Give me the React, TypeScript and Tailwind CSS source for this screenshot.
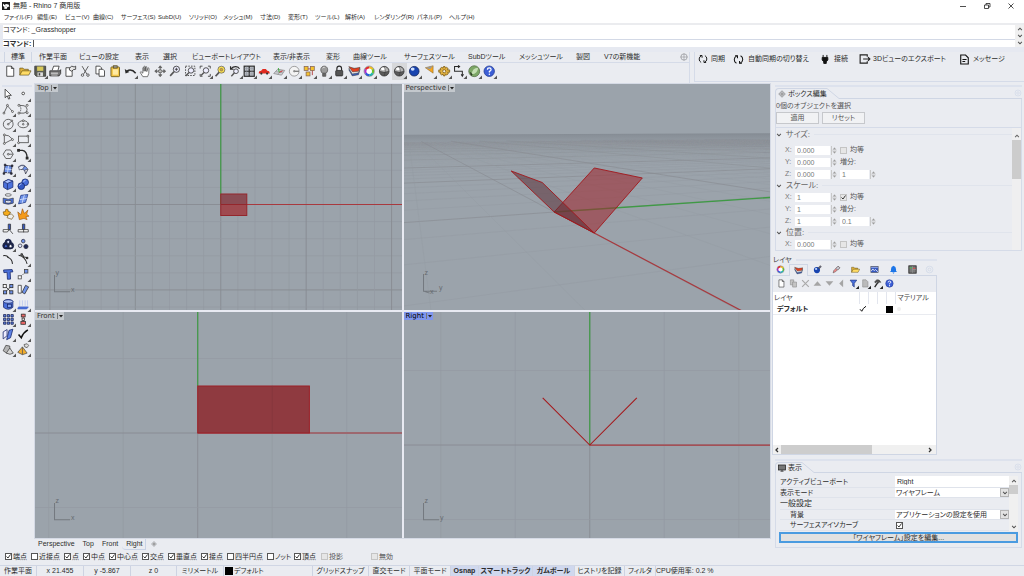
import { useState, type ReactNode } from "react";

/* ------------------------------------------------------------------ */
/* Icons                                                              */
/* ------------------------------------------------------------------ */

const K = "#2a2a2a";
const B = "#3f62c8";

const icons: Record<string, ReactNode> = {
  newFile: <path d="M3.5 1.5h6l3 3v10h-9zM9.5 1.5v3h3" fill="#fff" stroke={K} />,
  open: (
    <g stroke="#5b4a10" strokeWidth=".8">
      <path d="M1 13V4h4l1.5 1.5H12V8" fill="#e0b23c" />
      <path d="M1 13l3-5.5h11.5L12.5 13z" fill="#ffdc66" />
    </g>
  ),
  save: (
    <g>
      <path d="M1 1.5h14v13H3l-2-2z" fill="#5b5e55" stroke="#333" />
      <rect x="4" y="2" width="8" height="5.5" fill="#d8c95a" />
      <rect x="4.5" y="9.5" width="7" height="5" fill="#ddd" />
      <rect x="6" y="10.5" width="2" height="3" fill="#444" />
    </g>
  ),
  print: (
    <g stroke={K}>
      <path d="M4 7l2-5.5h7L11.5 7" fill="#fff" />
      <path d="M1 7.5h13l1-1.5v5l-2 3H1z" fill="#777" />
      <path d="M2.5 10.5h9" stroke="#fff" />
      <path d="M3 13h8" stroke="#ddd" />
    </g>
  ),
  props: (
    <g stroke={K}>
      <path d="M2.5 3.5h8v11h-8z" fill="#fff" />
      <path d="M7 4l3-2.5 3 1 2-1v4l-3 .5-2 2-3-1.5z" fill="#e6e6e6" />
    </g>
  ),
  cut: (
    <g stroke="#555" fill="none" strokeWidth="1.2">
      <path d="M4 1.5l6 10M12 1.5l-6 10" />
      <circle cx="4.5" cy="13" r="1.6" />
      <circle cx="11.5" cy="13" r="1.6" />
    </g>
  ),
  copy: (
    <g stroke={K} fill="#fff">
      <path d="M2.5 1.5h5l2 2v8h-7z" />
      <path d="M6.5 5.5h5l2 2v7h-7z" />
    </g>
  ),
  paste: (
    <g stroke="#5c4b12">
      <rect x="2.5" y="2.5" width="11" height="12.5" rx="1" fill="#f3c74b" />
      <rect x="5.5" y="1" width="5" height="3" fill="#999" />
      <path d="M5 5.5h6.5v7H5z" fill="#ffeaa3" stroke="none" />
    </g>
  ),
  undo: (
    <g>
      <path d="M4 7.5Q10 4.5 15 10.500" fill="none" stroke={K} strokeWidth="2" />
      <path d="M1 5l1 6 5-2z" fill={K} />
    </g>
  ),
  hand: (
    <path
      d="M5 15L1.5 9.5l1-1L5 10.5V3.5q1-1 1.5 0V8 2q1-1 1.6 0V8l.5-5.5q1-1 1.5 0L10 8.5 11.5 4q1-.6 1.4.3L12.5 11 11 15z"
      fill="#fff"
      stroke="#444"
      strokeWidth=".9"
    />
  ),
  rotate: (
    <g stroke="#555" fill="none">
      <path d="M8 2v12M2 8h12" />
      <path d="M6 3.500L8 1l2 2.500zM6 12.500L8 15l2-2.500zM3.500 6L1 8l2.500 2zM12.500 6L15 8l-2.500 2z" fill="#777" />
      <ellipse cx="8" cy="8" rx="2.500" ry="2" fill="#bbb" />
    </g>
  ),
  zoomIn: (
    <g fill="none" stroke={K}>
      <circle cx="9.5" cy="5.5" r="4" fill="#eef" />
      <path d="M6.5 8.5L1.5 14" strokeWidth="2" stroke="#555" />
      <path d="M9.5 3.5v4M7.5 5.5h4" />
    </g>
  ),
  zoomWin: (
    <g fill="none" stroke={K}>
      <rect x="2" y="1.5" width="12" height="12" strokeDasharray="2 1.5" />
      <circle cx="9" cy="7" r="3.5" fill="#eef" />
      <path d="M6.5 9.5L2 14" strokeWidth="1.8" stroke="#555" />
    </g>
  ),
  zoomExt: (
    <g fill="none" stroke={K}>
      <path d="M1.5 4.5v-3h3M11.5 1.5h3v3M14.5 11.5v3h-3M4.5 14.5h-3v-3" />
      <circle cx="9" cy="7" r="3.5" fill="#eef" />
      <path d="M6.5 9.5L2.5 13.5" strokeWidth="1.8" stroke="#555" />
    </g>
  ),
  zoomSel: (
    <g fill="none" stroke="#666">
      <circle cx="9.5" cy="6" r="4.5" fill="#ffe14a" />
      <circle cx="9.5" cy="6" r="1.7" fill="#e8a920" stroke="#777" />
      <path d="M6.5 9.5L2 14.5" strokeWidth="2.200" stroke="#555" />
    </g>
  ),
  undoView: (
    <g fill="none" stroke={K}>
      <path d="M2 1.5v4h4M2.5 5C6 1 12 1.5 13.5 5" strokeWidth="1.5" />
      <circle cx="9" cy="8" r="3" fill="#eef" />
      <path d="M7 10l-4 4.5" strokeWidth="1.8" stroke="#555" />
    </g>
  ),
  fourView: (
    <g stroke={K}>
      <rect x="1.5" y="1.5" width="13" height="13" fill="#b9bdc4" strokeWidth="1.5" />
      <path d="M8 1.5v13M1.5 8h13" strokeWidth="1.5" />
      <path d="M4.5 2v12M11.5 2v12M2 4.5h12M2 11.5h12" stroke="#8a8f98" strokeWidth=".6" />
    </g>
  ),
  car: (
    <g>
      <path d="M1 9.5Q1 7.5 4 7.5L6 5h4l2 2.5q3 0 3 2.5v1H1z" fill="#e02a20" />
      <circle cx="4.3" cy="11" r="1.4" fill="#333" />
      <circle cx="11.7" cy="11" r="1.4" fill="#333" />
    </g>
  ),
  cplane: (
    <g>
      <path d="M1 11l5-5.5L15 7l-4 6z" fill="#cfd3da" stroke="#888" />
      <path d="M3.5 8.5l9 1.5M6 12l5-5.5" stroke="#999" />
      <path d="M8 9.5l4.5-2" stroke="#c33" strokeWidth="1.2" />
      <path d="M8 9.5L7 4" stroke="#3a3" strokeWidth="1.2" />
    </g>
  ),
  named: (
    <g fill="none" stroke="#888">
      <circle cx="8" cy="8" r="6.300" fill="#f3f3f3" />
      <path d="M8 8h6" stroke={K} />
      <circle cx="8" cy="8" r="1" fill="#888" />
    </g>
  ),
  selGroup: (
    <g>
      <path d="M4 5h8v8" fill="none" stroke="#a22" />
      <rect x="1.5" y="2" width="5" height="5" fill="#f4c22e" stroke="#865" />
      <rect x="9.5" y="2" width="5" height="5" fill="#f4c22e" stroke="#865" />
      <rect x="4" y="9" width="5" height="5" fill="#f4c22e" stroke="#865" />
    </g>
  ),
  bulb: (
    <g stroke="#555">
      <path d="M5.5 10.5C2 7 3.5 1.5 8 1.5S14 7 10.5 10.5z" fill="#9b9b9b" />
      <path d="M6 11h4v3.5H6z" fill="#666" />
      <path d="M6 4q1-1.3 2.5-1" stroke="#fff" fill="none" />
    </g>
  ),
  lock: (
    <g stroke={K}>
      <path d="M5 7V4.5a3 3 0 016 0V7" fill="none" strokeWidth="1.5" />
      <rect x="3.5" y="7" width="9" height="7" rx="1" fill="#555" />
    </g>
  ),
  layers: (
    <g stroke="#333" strokeWidth=".6">
      <path d="M1 6l4.500 8 8-1.500 2-7z" fill="#3d5fb5" />
      <path d="M1 4l4.500 7.500 8-1.500 2-5.500z" fill="#f2f2f2" />
      <path d="M1 2l5 7 7.500-1 2-5-7.500 1.500z" fill="#e5401f" />
    </g>
  ),
  wheel: (
    <g fill="none" strokeWidth="3">
      <path d="M8 3a5 5 0 014.3 2.5" stroke="#f0c020" />
      <path d="M12.3 5.5a5 5 0 010 5" stroke="#6cc52c" />
      <path d="M12.3 10.5A5 5 0 018 13" stroke="#20b8b0" />
      <path d="M8 13a5 5 0 01-4.3-2.5" stroke="#2c58e0" />
      <path d="M3.7 10.5a5 5 0 010-5" stroke="#b02cd0" />
      <path d="M3.7 5.5A5 5 0 018 3" stroke="#e52a2a" />
      <circle cx="8" cy="8" r="6.7" stroke="#444" strokeWidth=".5" />
      <circle cx="8" cy="8" r="3.3" fill="#fff" stroke="none" />
    </g>
  ),
  ballWire: (
    <g>
      <circle cx="8" cy="8" r="6.200" fill="#5a5a5a" stroke="#333" />
      <path d="M2.5 8a5.5 5.5 0 0111 0q-5 2-11 0z" fill="#b5b5b5" />
      <ellipse cx="6.5" cy="5" rx="2.6" ry="1.9" fill="#fff" />
      <path d="M8 2q3 5 0 12M2 8q6 3 12 0" fill="none" stroke="#333" strokeWidth=".6" />
    </g>
  ),
  ballBlue: (
    <g>
      <circle cx="8" cy="8" r="6.2" fill="#1844b0" stroke="#12245c" />
      <ellipse cx="6" cy="5.3" rx="2.5" ry="2" fill="#cfe0ff" />
    </g>
  ),
  spot: (
    <g>
      <path d="M3 3.5L13 1v9.500z" fill="#f5a623" stroke="#7a5a20" strokeWidth=".6" />
      <path d="M3 3.500L13 1l-4 4.500z" fill="#999" />
    </g>
  ),
  gear: (
    <g stroke="#7a5a12">
      <path
        d="M7 2h2l.5 2 1.5-1 2 1.5-.8 1.8H15v3h-2.5l.7 2-1.9 1.5-1.8-1L9 14H7l-.5-2.2-1.8 1-1.9-1.5.7-2H1v-3h2.5L2.8 4.5l2-1.5 1.7 1z"
        fill="#e0b040"
      />
      <circle cx="8" cy="8" r="2" fill="#f5efe0" />
    </g>
  ),
  dim: (
    <g fill="none" stroke={K} strokeWidth="1.3">
      <path d="M8 2H2v6h10v6" />
      <path d="M6.500 .500L8.500 2 6.500 3.500M10.500 12l1.500 2.500 1.500-2.500" />
    </g>
  ),
  grass: (
    <g>
      <circle cx="8" cy="8" r="7" fill="#7da867" stroke="#56704a" />
      <path d="M5 12q0-8 8-8.500-.5 7.500-8 8.500z" fill="#c5dfb4" />
      <path d="M2 8.500l4 3.500-2 2z" fill="#2c3b25" />
    </g>
  ),
  help: (
    <g>
      <circle cx="8" cy="8" r="6.7" fill="#3d5fd6" stroke="#243c94" />
      <path d="M5.7 6.2q0-2.4 2.4-2.4 2.3 0 2.3 2Q10.4 7.3 8.2 8.2V9.6" fill="none" stroke="#fff" strokeWidth="1.6" />
      <circle cx="8.2" cy="12" r="1" fill="#fff" />
    </g>
  ),

  arrow: <path d="M4 1.5v11l2.7-2.5 1.8 4.3 1.7-.8L8.4 9.5H12z" fill="#fff" stroke={K} />,
  point: <circle cx="8" cy="7" r="1.7" fill="#fff" stroke={K} />,
  polyline: (
    <g fill="#fff" stroke="#444">
      <path d="M2.5 13L7 3.5l6 7" fill="none" />
      <circle cx="2.5" cy="13" r="1.2" />
      <circle cx="7" cy="3" r="1.2" />
      <circle cx="13.5" cy="11" r="1.2" />
    </g>
  ),
  ctrlCurve: (
    <g fill="#fff" stroke="#444">
      <path d="M3 13h6q4-1 4-4.500T9 3.500L3 3" fill="none" />
      <path d="M3 3q4 4 0 10" fill="none" strokeDasharray="2 1" />
      <circle cx="2.5" cy="3" r="1.3" />
      <circle cx="13" cy="3" r="1.3" />
      <circle cx="2.5" cy="13" r="1.3" />
      <circle cx="13" cy="12.5" r="1.3" />
    </g>
  ),
  circle: (
    <g fill="none" stroke="#444">
      <circle cx="8" cy="8" r="6.3" />
      <path d="M8 8l4.5-4" />
      <circle cx="8" cy="8" r="1" fill="#fff" />
      <circle cx="12.7" cy="3.5" r="1" fill="#fff" />
    </g>
  ),
  ellipse: (
    <g fill="none" stroke="#444">
      <ellipse cx="8" cy="8" rx="6.7" ry="4.5" />
      <circle cx="8" cy="8" r="1" />
      <circle cx="8" cy="3.5" r="1.2" fill="#fff" />
      <circle cx="14" cy="8" r="1" fill="#fff" />
    </g>
  ),
  arc: (
    <g fill="none" stroke="#444">
      <path d="M3 2.5v11l10.5-5.5Q9 2 3 2.5z" />
      <circle cx="3" cy="2.5" r="1.2" fill="#fff" />
      <circle cx="3" cy="13.5" r="1.2" fill="#fff" />
      <circle cx="13.5" cy="8.5" r="1.2" fill="#fff" />
    </g>
  ),
  rect: (
    <g fill="none" stroke="#444">
      <rect x="2" y="4" width="12.5" height="8.5" />
      <circle cx="2" cy="12.5" r="1.2" fill="#fff" />
      <circle cx="14" cy="4" r="1.2" fill="#fff" />
    </g>
  ),
  polygon: (
    <g fill="none" stroke="#444">
      <path d="M5 2.5h6L14.5 8 11 13.5H5L1.5 8z" />
      <path d="M8 8h6" />
      <circle cx="8" cy="8" r="1.1" fill="#fff" />
    </g>
  ),
  fillet: (
    <g fill="none" stroke={K} strokeWidth="1.6">
      <path d="M2 3h5q6 1 6 10" />
      <rect x="1" y="2" width="2" height="2" fill={K} />
      <rect x="12" y="12" width="2" height="2" fill={K} />
    </g>
  ),
  srfPts: (
    <g stroke="#223">
      <path d="M4 3l9 1-1.5 9-9-1z" fill="#6f93ea" />
      <path d="M3.5 7.5l9 1M8.5 3.5L7 13" stroke="#dbe5ff" />
      <path d="M1.5 12.5h2v2h-2zM3 1.5h2v2H3zM12 2.5h2v2h-2zM11 12.5h2v2h-2z" fill="#333" />
    </g>
  ),
  srfEdge: (
    <g stroke="#334" strokeWidth=".8">
      <path d="M2 5q6-6 12 3l-3 6q0-6-6-6z" fill="#6f93ea" />
      <path d="M2 5q4-3 8-1L6.500 8.500Q4 8 3 9z" fill="#e5ebfa" />
      <path d="M11 14l3-6-4 1z" fill="#fff" />
    </g>
  ),
  box: (
    <g stroke="#1d2f70">
      <path d="M2 5l6-3 6 2v8l-7 3-5-3z" fill="#4a70dc" />
      <path d="M2 5l5 2 7-3-6-2z" fill="#a9c0ff" />
      <path d="M7 7v8" />
    </g>
  ),
  spheres: (
    <g stroke="#16276a">
      <circle cx="10.5" cy="5.5" r="4.3" fill="#4a70dc" />
      <circle cx="5.5" cy="10.5" r="4.3" fill="#3358c4" />
      <path d="M3 10q1-2.5 3-2.5M8.5 5q.7-2 2.5-2" stroke="#cfdcff" fill="none" />
    </g>
  ),
  revolve: (
    <g stroke="#333" strokeWidth=".8">
      <ellipse cx="8" cy="2.500" rx="4" ry="1.600" fill="none" />
      <path d="M1.5 6.500q6.5 3 13 0v6.500q-6.5 3-13 0z" fill="#4a70dc" />
      <path d="M4.5 9.500q3.5 1 7 0v3q-3.5 1-7 0z" fill="#e9efff" />
    </g>
  ),
  mesh: (
    <g stroke="#223a86">
      <path d="M5 3l9-1-3 10-9 2z" fill="#6f93ea" />
      <path d="M3.5 8.5l9-1.5M9.5 2.5L6.5 13" stroke="#dbe5ff" />
    </g>
  ),
  puzzle: (
    <g stroke="#6a4a08" strokeWidth=".8">
      <path d="M1.5 5l3-.5Q4 1 6.5 1.5T7.5 4L11 5.5 9.5 8l-2 2-5-1z" fill="#f6ac1d" />
      <path d="M8 9l4-1.5 3 3-2.5 4-3-1-3-1z" fill="#eee" />
    </g>
  ),
  explode: (
    <path d="M3 15L1 5l4 3.5L7 1l2.5 6L14 2.5 12.5 8l3 2.5-4 .7L13 15l-4-1.5z" fill="#f59a18" stroke="#8f4a08" strokeWidth=".7" />
  ),
  trim: (
    <g stroke="#333">
      <path d="M9 8l5 6" fill="none" />
      <path d="M8 1.5h3v7H8z" fill="#3558c0" />
      <path d="M1.5 8.5H9l-2 3H1.5z" fill="#fff" />
    </g>
  ),
  split: (
    <g stroke="#333">
      <path d="M7 1.5h3v7H7z" fill="#3558c0" />
      <path d="M1.5 8.5h13v3h-13z" fill="#fff" />
      <path d="M8.5 8v4" />
    </g>
  ),
  group: (
    <g stroke="#101840">
      <path d="M8 1.500q4 0 4 4 3 1 3 4.500 0 4-4 4H5q-4 0-4-4Q1 6.500 4 5.500q0-4 4-4z" fill="#1d2446" />
      <circle cx="8" cy="5" r="2" fill="#dfe6ff" />
      <circle cx="5" cy="10.5" r="2" fill="#3f62c8" />
      <circle cx="11" cy="10.5" r="2" fill="#fff" />
    </g>
  ),
  ungroup: (
    <g stroke="#334">
      <circle cx="8" cy="4" r="2.3" fill="#6f93ea" />
      <circle cx="4" cy="10" r="2.3" fill="#dfe6ff" />
      <circle cx="11.5" cy="11" r="2.7" fill="#1d2857" />
    </g>
  ),
  blend: (
    <g fill="none" stroke={K} strokeWidth="1.4">
      <path d="M1.500 3.500Q6 2.500 8.500 6" />
      <path d="M7 5.500q6 1.500 6.500 8.500" />
    </g>
  ),
  extend: (
    <g fill="none" stroke={K} strokeWidth="1.3">
      <path d="M2 3q8 1 11 11M6 1l3 4 5 1" />
      <circle cx="6" cy="2" r="1" fill="#fff" />
      <circle cx="13" cy="6.5" r="1" fill="#fff" />
    </g>
  ),
  textT: <path d="M2 2.5L13 2l1 3-3.5.3.5 9-4 .2-.5-9L2.5 6z" fill="#4a70dc" stroke="#16276a" />,
  move: (
    <g stroke="#444">
      <path d="M5 11l6-6" strokeDasharray="2 1" />
      <rect x="1.5" y="10" width="4" height="4" fill="#fff" />
      <rect x="9.5" y="2" width="4.5" height="4.5" fill="#6f93ea" />
    </g>
  ),
  array: (
    <g stroke={K}>
      <path d="M4 4l8 8M4 12l8-8" />
      <rect x="1.5" y="2" width="4" height="4" fill="#fff" />
      <rect x="10" y="2" width="4" height="4" fill="#6f93ea" />
      <rect x="2" y="10" width="4" height="4" fill="#6f93ea" />
      <rect x="10" y="10" width="4" height="4" fill="#6f93ea" />
    </g>
  ),
  rotate2: (
    <g stroke="#333">
      <path d="M1.5 3h4v10h-4z" fill="#fff" />
      <path d="M11 3l4 2-5 9-3.5-2z" fill="#6f93ea" />
    </g>
  ),
  boolean: (
    <g stroke="#16276a">
      <path d="M2 4q6-4 12 0v8q-6 5-12 0z" fill="#4a70dc" />
      <ellipse cx="8" cy="4.5" rx="6" ry="2.3" fill="#b5c8fb" />
      <rect x="7" y="8" width="5" height="4" fill="#86a4f0" />
    </g>
  ),
  project: (
    <g stroke={B}>
      <path d="M3.5 3v7M7 3v7M10.5 3v7M13.5 3v7" stroke="#b8c6ee" />
      <path d="M2 11.5h12.5l-2 2.5H1z" fill="#4a70dc" />
    </g>
  ),
  gridArr: (
    <g fill="#5d82e6" stroke="#1c2450">
      <path d="M2 2h3v3H2zM6.7 2h3v3h-3zM11.5 2h3v3h-3zM2 6.7h3v3H2zM6.7 6.7h3v3h-3zM11.5 6.7h3v3h-3zM2 11.5h3v3H2zM6.7 11.5h3v3h-3zM11.5 11.5h3v3h-3z" />
    </g>
  ),
  align: (
    <g stroke="#333">
      <path d="M8 1v14" stroke="#c33" />
      <rect x="5.5" y="1.5" width="5" height="3.5" fill="#e66" />
      <rect x="6.5" y="6.5" width="3" height="3" fill="#ddd" />
      <rect x="5" y="11" width="6" height="3.5" fill="#e66" />
    </g>
  ),
  flow: (
    <g stroke="#16276a">
      <path d="M1.5 5l5-3v8l-5 4z" fill="#eef" />
      <path d="M9 3l5-1.5-3 11L6 15z" fill="#5d82e6" />
    </g>
  ),
  check: <path d="M2 8.5l3.5 4Q8 6 14 2.5" fill="none" stroke="#111" strokeWidth="2" />,
  analyze: (
    <g stroke="#444">
      <path d="M5 3l5 1v8l-4 1-4.5-3z" fill="#b5b5b5" />
      <path d="M10 6.500l4.500 6.500q-4 3-9 0z" fill="#d5d5d5" />
    </g>
  ),
  drape: (
    <g stroke="#555">
      <path d="M9 2l4-1 2 2-2 3-3-1z" fill="#ddd" />
      <path d="M7 5l6 8-6 2-6-3z" fill="#f2ad2c" />
      <path d="M7 5v10" />
    </g>
  ),
  pen: (
    <g stroke="#444" strokeWidth=".8">
      <path d="M2 14l1-4 8-8 3 3-8 7z" fill="#e88" />
      <path d="M7 6l3 3 4-4-3-3z" fill="#c9ccd6" />
    </g>
  ),
  material: (
    <g>
      <circle cx="7" cy="9" r="5.5" fill="#1844b0" />
      <ellipse cx="5.5" cy="7" rx="2" ry="1.6" fill="#cfe0ff" />
      <path d="M9 5l4-4 2 2-4 4z" fill="#667" stroke="#333" strokeWidth=".6" />
    </g>
  ),
  imgPanel: (
    <g>
      <rect x="1.5" y="2.5" width="13" height="11" fill="#3558c0" stroke="#555" />
      <path d="M2 11l3-4 2.5 3 2-2 4.5 4" fill="none" stroke="#fff" strokeWidth="1.4" />
      <path d="M2 4.5h12" stroke="#c9d5ff" />
    </g>
  ),
  bell: <path d="M8 1.5q4.5 1 4.5 6v3l2 2h-13l2-2v-3q0-5 4.5-6zM6 13.500h4L8 15.500z" fill="#1d76e8" />,
  panelDark: (
    <g>
      <rect x="1.5" y="1.5" width="13" height="13" fill="#7a7a7a" stroke="#222" strokeWidth="1.5" />
      <path d="M8 2v12M8 8h6" stroke="#999" />
      <path d="M3 5h4" stroke="#4c4" strokeWidth="1.500" />
      <path d="M9 6h4" stroke="#e44" strokeWidth="1.500" />
    </g>
  ),
  deco: (
    <g fill="none" stroke="#c8d3e4">
      <circle cx="8" cy="8" r="6" />
      <circle cx="8" cy="8" r="2.5" />
    </g>
  ),
  gearLine: (
    <g fill="none" stroke="#8b8d92" strokeWidth="1.3">
      <circle cx="8" cy="8" r="6.3" />
      <circle cx="8" cy="8" r="2.3" />
      <path d="M8 1v3M8 12v3M1 8h3M12 8h3" />
    </g>
  ),
  copyGray: (
    <g stroke="#888" fill="#c4c4c4">
      <path d="M2.5 1.5h6v9h-6z" />
      <path d="M6.5 5.5h7v9h-7z" />
    </g>
  ),
  xGray: <path d="M2 2l12 12M14 2L2 14" stroke="#a9a9a9" strokeWidth="2" />,
  triUp: <path d="M8 4l7 8H1z" fill="#a5a5a5" />,
  triDown: <path d="M8 12L1 4h14z" fill="#a5a5a5" />,
  triLeft: <path d="M4 8l7-7v14z" fill="#a5a5a5" />,
  funnel: <path d="M2 2h12L9.5 8v6.5L6.5 12V8z" fill="#4a70dc" stroke="#16276a" />,
  docGray: <path d="M3 1.5h6l3.5 3.5v9.5H3z" fill="#bbb" stroke="#888" />,
  hammer: (
    <g stroke={K}>
      <path d="M3 5l4-3.500 4 .500 3 4-2.500-.500-2 2L7 5 4.500 7z" fill="#555" />
      <path d="M8.5 6.500L3 14.500" strokeWidth="2.500" />
    </g>
  ),
  sync: (
    <g fill="none" stroke="#111" strokeWidth="1.5">
      <path d="M5 13.5A6 6 0 015.5 2.7M11 2.5a6 6 0 01-.5 10.8" />
      <path d="M3 2.5h3.5V6M13 13.5H9.5V10" />
    </g>
  ),
  plug: (
    <path d="M5 1.5v4M11 1.5v4M3.5 5.5h9v4L10 12.5v2.5H6v-2.5L3.5 9.5z" fill="#111" stroke="#111" strokeWidth="1.5" />
  ),
  exportI: (
    <g fill="none" stroke="#222" strokeWidth="1.5">
      <path d="M11 5V2.5H1.5v11H11V11" />
      <path d="M5.5 8h9M12 5.5L14.5 8 12 10.5" />
    </g>
  ),
  message: (
    <g fill="none" stroke="#111" strokeWidth="1.6">
      <path d="M2.5 1.5h7l4 4v9h-11z" />
      <path d="M5 8h6M5 11h4" />
    </g>
  ),
  cube3: (
    <g fill="none" stroke="#444">
      <path d="M8 1.5L14.5 8 8 14.5 1.5 8z" />
      <path d="M8 4.5V12M4.5 8H12" />
      <circle cx="8" cy="8" r="2" fill="#fff" />
    </g>
  ),
  monitor: (
    <g>
      <rect x="1" y="2" width="14" height="10" fill="#777" stroke="#222" strokeWidth="1.5" />
      <path d="M5 14.5h6M8 12v2" stroke="#222" strokeWidth="1.5" />
    </g>
  ),
  rhino: (
    <g>
      <rect width="16" height="16" fill="#1a1a1a" />
      <path d="M2 3l3 3 3-2 5 1 2 4-4 1-2 4-5-1 1-3-3-2z" fill="#fff" />
      <path d="M7 7l2 1-1 2z" fill="#1a1a1a" />
    </g>
  ),
};

function Icon({ name, className = "size-[13px]" }: { name: string; className?: string }) {
  return (
    <svg viewBox="0 0 16 16" className={`shrink-0 ${className}`} aria-hidden="true">
      {icons[name]}
    </svg>
  );
}

function ToolButton({ name, flyout = false, active = false }: { name: string; flyout?: boolean; active?: boolean }) {
  return (
    <button
      type="button"
      aria-label={name}
      className={`flex min-w-0 items-center justify-center ${active ? "bg-[#d7d8da]" : "hover:bg-[#dde2ee]"}`}
    >
      <svg viewBox="0 0 18 18" className="size-[14px]" aria-hidden="true">
        {icons[name]}
        {flyout && <path d="M18 13.5V18h-4.500z" fill="#555" />}
      </svg>
    </button>
  );
}

/* ------------------------------------------------------------------ */
/* Top area                                                           */
/* ------------------------------------------------------------------ */

const menus: [string, string][] = [
  ["ファイル(F)", "w-[33px]"],
  ["編集(E)", "w-[28px]"],
  ["ビュー(V)", "w-[28px]"],
  ["曲線(C)", "w-[28px]"],
  ["サーフェス(S)", "w-[37px]"],
  ["SubD(U)", "w-[31px]"],
  ["ソリッド(O)", "w-[34px]"],
  ["メッシュ(M)", "w-[37px]"],
  ["寸法(D)", "w-[28px]"],
  ["変形(T)", "w-[27px]"],
  ["ツール(L)", "w-[30px]"],
  ["解析(A)", "w-[29px]"],
  ["レンダリング(R)", "w-[43px]"],
  ["パネル(P)", "w-[32px]"],
  ["ヘルプ(H)", "w-[32px]"],
];

const toolTabs: [string, string][] = [
  ["標準", "w-[28px]"],
  ["作業平面", "w-[40px]"],
  ["ビューの設定", "w-[56px]"],
  ["表示", "w-[28px]"],
  ["選択", "w-[29px]"],
  ["ビューポートレイアウト", "w-[81px]"],
  ["表示/非表示", "w-[53px]"],
  ["変形", "w-[27px]"],
  ["曲線ツール", "w-[51px]"],
  ["サーフェスツール", "w-[64px]"],
  ["SubDツール", "w-[51px]"],
  ["メッシュツール", "w-[57px]"],
  ["製図", "w-[28px]"],
  ["V7の新機能", "w-[60px]"],
];

const toolbar = [
  "newFile", "open", "save+", "print", "props", "cut", "copy", "paste", "undo+", "hand", "rotate",
  "zoomIn", "zoomWin", "zoomExt+", "zoomSel", "undoView+", "fourView+", "car+", "cplane+", "named+",
  "selGroup+", "bulb+", "lock+", "layers+", "wheel+", "ballWire", "ballWire+", "ballBlue+", "spot+",
  "gear+", "dim+", "grass+", "help+",
];

function TitleBar() {
  return (
    <header className="flex h-3 items-center bg-white pl-[2px]">
      <Icon name="rhino" className="size-2" />
      <h1 className="ml-[3px] flex-1 text-[7px] leading-3">無題 - Rhino 7 商用版</h1>
      <div className="flex items-center gap-4 pr-[9px]">
        <button type="button" aria-label="最小化">
          <svg viewBox="0 0 8 8" className="size-2"><path d="M1 4.5h6" stroke="#222" strokeWidth=".8" /></svg>
        </button>
        <button type="button" aria-label="元に戻す">
          <svg viewBox="0 0 8 8" className="size-2" fill="none" stroke="#222" strokeWidth=".8"><path d="M1.5 3h4v3.5h-4zM3 3V1.5h4V5H5.5" /></svg>
        </button>
        <button type="button" aria-label="閉じる">
          <svg viewBox="0 0 8 8" className="size-2"><path d="M1.500 1.5l5 5M6.5 1.5l-5 5" stroke="#222" strokeWidth=".8" /></svg>
        </button>
      </div>
    </header>
  );
}

function Menus() {
  return (
    <nav className="flex h-[11px] items-center bg-white pl-1 text-[6px] leading-[11px]">
      {menus.map(([label, w]) => (
        <button key={label} type="button" className={`text-left whitespace-nowrap ${w}`}>
          {label}
        </button>
      ))}
    </nav>
  );
}

function CommandArea() {
  return (
    <section className="border-t-2 border-[#ebecef] bg-white">
      <div className="flex border-l-[3px] border-[#e6e9f1]">
        <div className="min-w-0 flex-1">
          <p className="h-[14px] text-[7px] leading-[9px]">コマンド: _Grasshopper</p>
          <label className="flex h-2 items-center border-t border-[#d3d9e6] text-[7px] leading-[7px] font-bold">
            コマンド:
            <input className="ml-[2px] h-[7px] flex-1 border-l border-[#555] bg-transparent text-[7px] outline-none" />
          </label>
        </div>
        <div className="flex w-[9px] flex-col items-center justify-between bg-[#f0f0f0] py-px">
          <Chevron up />
          <Chevron />
          <Chevron />
        </div>
      </div>
    </section>
  );
}

function Chevron({ up = false }: { up?: boolean }) {
  return (
    <svg viewBox="0 0 8 8" className="size-[6px] shrink-0" fill="none" stroke="#555" strokeWidth="1.4" aria-hidden="true">
      <path d={up ? "M1.5 5.5L4 3l2.5 2.5" : "M1.5 2.5L4 5l2.5-2.5"} />
    </svg>
  );
}

function Toolbars() {
  const [tab, setTab] = useState("標準");
  return (
    <section className="flex h-9 border-t-[5px] border-[#e6e9f1] bg-[#eaecf1]">
      <div className="flex w-[690px] flex-col border-r border-[#d5dbe8]">
        <div className="flex h-[11px] items-stretch border-b border-[#d5dbe8] pl-1">
          {toolTabs.map(([label, w]) => (
            <button
              key={label}
              type="button"
              onClick={() => setTab(label)}
              className={`text-left text-[7px] leading-[10px] whitespace-nowrap ${w} ${
                tab === label ? "border-x border-[#cfd6e4] pl-[6px]" : "pl-[7px]"
              }`}
            >
              {label}
            </button>
          ))}
          <button type="button" aria-label="オプション" className="ml-auto pr-px">
            <Icon name="gearLine" className="size-2" />
          </button>
        </div>
        <div className="ml-1 grid h-[17px] w-[493px] grid-cols-[repeat(33,minmax(0,1fr))]">
          {toolbar.map((t, i) => (
            <ToolButton key={i} name={t.replace("+", "")} flyout={t.endsWith("+")} active={i === 26} />
          ))}
        </div>
      </div>
      <div className="ml-1 flex h-[30px] flex-1 items-start border-b border-l border-[#d5dbe8] pl-[3px] text-[7px] leading-[14px]">
        <button type="button" className="flex h-[14px] w-[35px] items-center gap-[3px] whitespace-nowrap"><Icon name="sync" className="size-[10px]" />同期</button>
        <button type="button" className="flex h-[14px] w-[87px] items-center gap-[4px] whitespace-nowrap"><Icon name="sync" className="size-[11px]" />自動同期の切り替え</button>
        <button type="button" className="flex h-[14px] w-[39px] items-center gap-1 whitespace-nowrap"><Icon name="plug" className="size-[10px]" />接続</button>
        <button type="button" className="flex h-[14px] w-[99px] items-center gap-[2px] whitespace-nowrap"><Icon name="exportI" className="size-3" />3Dビューのエクスポート</button>
        <button type="button" className="flex h-[14px] items-center gap-[3px] pl-px whitespace-nowrap"><Icon name="message" className="size-[11px]" />メッセージ</button>
      </div>
    </section>
  );
}

/* ------------------------------------------------------------------ */
/* Side tools                                                         */
/* ------------------------------------------------------------------ */

const sideTools = [
  "arrow", "point+", "polyline+", "ctrlCurve+", "circle+", "ellipse+", "arc+", "rect+", "polygon+",
  "fillet+", "srfPts+", "srfEdge+", "box+", "spheres+", "revolve+", "mesh+", "puzzle", "explode",
  "trim", "split", "group+", "ungroup", "blend", "extend+", "textT", "move+", "array", "rotate2",
  "boolean+", "project+", "gridArr+", "align+", "flow+", "check+", "analyze+", "drape+",
];

function SideTools() {
  return (
    <aside className="w-[34px] shrink-0 px-px pt-[2px]">
      <div className="mx-px h-[2px] bg-[#dde2ed]" />
      <div className="grid h-[270px] w-[30px] grid-cols-2 grid-rows-18">
        {sideTools.map((t) => (
          <ToolButton key={t} name={t.replace("+", "")} flyout={t.endsWith("+")} />
        ))}
      </div>
    </aside>
  );
}

/* ------------------------------------------------------------------ */
/* Viewports                                                          */
/* ------------------------------------------------------------------ */

const MINOR = "#949aa2";
const MAJOR = "#888b92";
const RED = "#a8393e";
const GREEN = "#3f9a45";

function range(from: number, to: number) {
  return Array.from({ length: to - from + 1 }, (_, i) => from + i);
}

function OrthoGrid({ ox, oy, step, major }: { ox: number; oy: number; step: number; major: number }) {
  return (
    <g>
      {range(-12, 12).map((i) => (
        <g key={i} stroke={i % major === 0 ? MAJOR : MINOR} strokeWidth={i % major === 0 ? 0.9 : 0.7}>
          <path d={`M${ox + i * step} -50V300`} />
          <path d={`M-50 ${oy + i * step}H450`} />
        </g>
      ))}
    </g>
  );
}

function AxisMark({ h, v }: { h: string; v: string }) {
  return (
    <g fill="none" stroke="#74797f" strokeWidth="1">
      <path d="M19.5 191v16.5H35" />
      <text x="20.5" y="191" fontSize="7" fill="#666b71" stroke="none">{v}</text>
      <text x="36" y="208" fontSize="7" fill="#666b71" stroke="none">{h}</text>
    </g>
  );
}

function TopView() {
  return (
    <>
      <OrthoGrid ox={185.5} oy={120.5} step={17.06} major={5} />
      <path d="M185.5 -50V120" stroke={GREEN} strokeWidth="1.2" />
      <path d="M185.5 120.5H450" stroke={RED} strokeWidth="1.2" />
      <path d="M185.5 110h26v10.5h-26z" fill="#8a4c54" />
      <path d="M185.5 120.5h26v11h-26z" fill="#9f4a50" />
      <path d="M185.5 110h26v21.5h-26zM185.5 120.5h26" fill="none" stroke="#94262c" />
      <AxisMark h="x" v="y" />
    </>
  );
}

function FrontView() {
  return (
    <>
      <OrthoGrid ox={162.5} oy={121} step={74.4} major={5} />
      <path d="M162.5 -50V74" stroke={GREEN} strokeWidth="1.2" />
      <path d="M162.5 121H450" stroke={RED} strokeWidth="1.2" />
      <path d="M162.5 74h111.5v47h-111.5z" fill="#8f3a40" stroke="#9c1f26" />
      <path d="M237 74v47" stroke="#84363c" strokeWidth=".8" />
      <AxisMark h="x" v="z" />
    </>
  );
}

function RightView() {
  return (
    <>
      <OrthoGrid ox={185.5} oy={133} step={74.4} major={5} />
      <path d="M185.5 -50V133" stroke={GREEN} strokeWidth="1.2" />
      <path d="M185.5 133H450" stroke={RED} strokeWidth="1.2" />
      <path d="M138.500 86l47 47L232.500 86" fill="none" stroke="#a5191c" strokeWidth="1.1" />
      <AxisMark h="y" v="z" />
    </>
  );
}

/* Ground plane projection: origin, the two vanishing points and the unit scales. */
function project(i: number, j: number): string {
  const a = -0.1434 * i;
  const b = 0.0534 * j;
  const w = 1 + a + b;
  return `${((150 + a * 4 + b * 1276) / w).toFixed(1)} ${((128 + a * 50.5 + b * 49) / w).toFixed(1)}`;
}

function gridOpacity(n: number) {
  const d = Math.abs(n);
  if (d > 30) return 0.3;
  return d > 10 ? 0.5 : 0.8;
}

function PerspectiveView() {
  return (
    <>
      <defs>
        <linearGradient id="haze" x1="0" y1="0" x2="0" y2="1">
          <stop offset="0" stopColor="#747a82" stopOpacity=".6" />
          <stop offset=".4" stopColor="#7f858d" stopOpacity=".3" />
          <stop offset="1" stopColor="#9ba3ab" stopOpacity="0" />
        </linearGradient>
      </defs>
      <path d="M-40 51L420 49v22H-40z" fill="url(#haze)" />
      <g fill="none">
        {range(-60, 4).map((i) => (
          <path
            key={`i${i}`}
            d={`M${project(i, i > -3 ? -5 : -8)}L${project(i, 70)}`}
            stroke={i % 5 === 0 ? MAJOR : MINOR}
            strokeWidth={i % 5 === 0 ? 0.8 : 0.6}
            opacity={gridOpacity(i)}
          />
        ))}
        {range(-5, 60).map((j) => (
          <path
            key={`j${j}`}
            d={`M${project(j < -2 ? 2 : 5, j)}L${project(-70, j)}`}
            stroke={j % 5 === 0 ? MAJOR : MINOR}
            strokeWidth={j % 5 === 0 ? 0.8 : 0.5}
            opacity={gridOpacity(j * 2)}
          />
        ))}
      </g>
      <path d="M150 128L380 112.5" stroke={GREEN} strokeWidth="1.3" />
      <path d="M190 149L338 227l40 21" stroke={RED} strokeWidth="1.2" fill="none" />
      <g stroke="#a3161b" strokeWidth=".9" strokeLinejoin="round">
        <path d="M190 84l48 10-48 55-40-21z" fill="#9c2a30" fillOpacity=".58" />
        <path d="M107 87l31 11.5 52 50.5-40-21z" fill="#5a3036" fillOpacity=".55" />
      </g>
      <g fill="none" stroke="#74797f">
        <path d="M19.5 190v17H33M19.5 207l6 2" />
        <g fontSize="7" fill="#666b71" stroke="none">
          <text x="20.5" y="191">z</text>
          <text x="26" y="210">x</text>
          <text x="35" y="206">y</text>
        </g>
      </g>
    </>
  );
}

function Viewport({ name, active, onSelect, children }: { name: string; active: boolean; onSelect: () => void; children: ReactNode }) {
  return (
    <section className="relative min-h-0 min-w-0 overflow-hidden bg-[#9ba3ab]" onClick={onSelect}>
      <svg viewBox="0 0 366 226" preserveAspectRatio="xMidYMid slice" className="block size-full">
        {children}
      </svg>
      <button
        type="button"
        className={`absolute top-0 left-0 flex h-2 items-center gap-[2px] pr-px pl-[2px] font-['DejaVu_Sans'] text-[7px] leading-2 ${
          active ? "bg-[#7f96ee] text-black" : "bg-[#c3c8cd] text-[#333]"
        }`}
      >
        {name}
        <span className="flex h-[6px] items-center border-l border-[#777] pl-px">
          <svg viewBox="0 0 4 4" className="size-1"><path d="M0 1h4L2 3.5z" fill="#222" /></svg>
        </span>
      </button>
    </section>
  );
}

function Viewports() {
  const [active, setActive] = useState("Right");
  const views: Record<string, ReactNode> = {
    Top: <TopView />,
    Perspective: <PerspectiveView />,
    Front: <FrontView />,
    Right: <RightView />,
  };
  return (
    <main className="flex min-w-0 flex-1 flex-col">
      <div className="grid min-h-0 flex-1 grid-cols-2 grid-rows-2 gap-[2px] border border-[#d5dae5] bg-[#e8eaf2]">
        {Object.entries(views).map(([name, view]) => (
          <Viewport key={name} name={name} active={active === name} onSelect={() => setActive(name)}>
            {view}
          </Viewport>
        ))}
      </div>
      <div className="flex h-[11px] items-start text-[7px] leading-[10px]">
        {["Perspective", "Top", "Front", "Right"].map((t) => (
          <button
            key={t}
            type="button"
            onClick={() => setActive(t)}
            className={`px-1 ${active === t ? "rounded-bl border-r border-b border-[#c9d3e6] pr-[2px]" : ""}`}
          >
            {t}
          </button>
        ))}
        <button type="button" aria-label="追加" className="ml-[5px] flex h-[10px] items-center">
          <Icon name="cube3" className="size-[6px]" />
        </button>
      </div>
    </main>
  );
}

/* ------------------------------------------------------------------ */
/* Form pieces                                                        */
/* ------------------------------------------------------------------ */

function Check({ label, checked = false, disabled = false, hideLabel = false, gap = "gap-px" }: { label: string; checked?: boolean; disabled?: boolean; hideLabel?: boolean; gap?: string }) {
  return (
    <label className={`flex items-center whitespace-nowrap ${gap} ${disabled ? "text-[#555]" : ""}`}>
      <span className="relative flex">
        <input
          type="checkbox"
          defaultChecked={checked}
          disabled={disabled}
          aria-label={label}
          className="peer size-[7px] appearance-none border border-[#555] bg-white disabled:border-[#c4c4c4] disabled:bg-[#e6e6e6]"
        />
        <svg viewBox="0 0 7 7" className="pointer-events-none absolute inset-0 hidden size-[7px] peer-checked:block">
          <path d="M1.5 3.5L3 5l2.5-3.5" fill="none" stroke="#222" strokeWidth=".9" />
        </svg>
      </span>
      {!hideLabel && label}
    </label>
  );
}

function Spin({ label, value, short = false }: { label: string; value: string; short?: boolean }) {
  return (
    <span className="flex items-center">
      <input
        aria-label={label}
        defaultValue={value}
        className={`h-[9px] bg-white px-[2px] text-[7px] leading-[9px] text-[#777] outline-none ${short ? "w-[29px]" : "w-[35px]"}`}
      />
      <span className="ml-px flex h-[9px] w-[6px] items-center justify-center border-l border-[#c9c9c9]">
        <svg viewBox="0 0 6 8" className="h-[7px] w-[5px]"><path d="M3 .500l2 2.300H1zM3 7.500l2-2.300H1zM0 4h6" fill="#999" stroke="#bbb" strokeWidth=".4" /></svg>
      </span>
    </span>
  );
}

function Section({ title, values, checked = false, step, first = false }: { title: string; values: string[]; checked?: boolean; step?: string; first?: boolean }) {
  return (
    <fieldset>
      <legend className="flex h-[11px] w-full items-center gap-1 text-[8px] leading-[11px] text-[#666]">
        <Chevron />
        {title}:
        <span className="h-px flex-1 bg-[#e0e4ec]" />
      </legend>
      <div className={`flex flex-col text-[7px] text-[#777] ${first ? "pt-[4px]" : ""}`}>
        {values.map((v, i) => (
          <div key={i} className="flex h-3 items-center pl-[9px]">
            <span className="w-[10px]">{"XYZ"[i]}:</span>
            <Spin label={`${title} ${"XYZ"[i]}`} value={v} />
            <span className="ml-[3px] flex items-center text-[#555]">
              {i === 0 && <Check label="均等" checked={checked} disabled gap="gap-[3px]" />}
              {i === 1 && "増分:"}
              {i === 2 && step && <Spin label={`${title} 増分`} value={step} short />}
            </span>
          </div>
        ))}
      </div>
    </fieldset>
  );
}

function PanelTab({ icon, children }: { icon: string; children: ReactNode }) {
  return (
    <div className="flex h-[11px] items-end text-[7px] leading-[10px]">
      <div className="flex h-full items-center gap-[2px] rounded-tl border-t border-l border-[#cfd6e4] pl-[2px]">
        <Icon name={icon} className="size-2" />
        {children}
      </div>
      <svg viewBox="0 0 12 11" className="h-[11px] w-3" fill="none" stroke="#cfd6e4"><path d="M0 .5L12 10.5" /></svg>
      <span className="flex-1 border-b border-[#cfd6e4]" />
      <button type="button" aria-label="オプション" className="h-full border-b border-[#cfd6e4]"><Icon name="deco" className="size-2" /></button>
    </div>
  );
}

/* ------------------------------------------------------------------ */
/* Right-hand panels                                                  */
/* ------------------------------------------------------------------ */

function BoxEdit() {
  return (
    <section className="mr-[2px] ml-[3px]">
      <div className="mt-[2px] mb-px h-[2px] bg-[#dde2ed]" />
      <PanelTab icon="cube3">ボックス編集</PanelTab>
      <div className="border border-t-0 border-[#d5dbe8]">
        <p className="h-[13px] text-[7px] leading-[13px] text-[#555]">0個のオブジェクトを選択</p>
        <div className="flex gap-[3px] text-[7px] leading-[10px] text-[#555]">
          <button type="button" className="w-[43px] border border-[#c6c8cc] bg-[#f1f2f4]">適用</button>
          <button type="button" className="w-[43px] border border-[#c6c8cc] bg-[#f1f2f4]">リセット</button>
        </div>
        <div className="mt-[3px] flex h-[123px] border-t border-[#d5dbe8]">
          <div className="min-w-0 flex-1 overflow-hidden pt-px">
            <Section title="サイズ" values={["0.000", "0.000", "0.000"]} step="1" first />
            <Section title="スケール" values={["1", "1", "1"]} step="0.1" checked />
            <Section title="位置" values={["0.000"]} />
          </div>
          <div className="flex w-[9px] flex-col items-center bg-[#f0f0f0] pt-[5px] opacity-90">
            <Chevron up />
            <div className="mt-px h-[39px] w-full bg-[#c9c9c9]" />
          </div>
        </div>
      </div>
    </section>
  );
}

const panelTabs: [string, string][] = [
  ["wheel", "w-[17px]"],
  ["layers", "w-[19px]"],
  ["material", "w-[19px]"],
  ["pen", "w-[19px]"],
  ["open", "w-[19px]"],
  ["imgPanel", "w-[19px]"],
  ["bell", "w-[19px]"],
  ["panelDark", "w-[19px]"],
  ["deco", "w-[15px]"],
];
const layerTools = ["newFile", "copyGray", "xGray", "triUp", "triDown", "triLeft", "funnel+", "docGray+", "hammer+", "help"];

function Layers() {
  return (
    <section className="mt-1 flex w-[165px] flex-col">
      <div className="flex h-[9px] items-center gap-1 pl-px text-[7px] leading-[9px] text-[#444]">
        <h2>レイヤ</h2>
        <span className="h-[2px] flex-1 bg-[#dde2ed]" />
      </div>
      <div className="flex h-3">
        {panelTabs.map(([t, w], i) => (
          <button
            key={t}
            type="button"
            aria-label={t}
            className={`flex shrink-0 items-center justify-center ${w} ${
              i === 1 ? "border-x border-t border-[#cfd6e4]" : "border-b border-[#cfd6e4]"
            }`}
          >
            <Icon name={t} className="size-[9px]" />
          </button>
        ))}
      </div>
      <div className="border border-t-0 border-[#cfd6e4]">
        <div className="flex h-4 items-center gap-[2px] pl-1">
          {layerTools.map((t) => (
            <button key={t} type="button" aria-label={t} className="flex">
              <svg viewBox="0 0 18 18" className="size-[10px]">
                {icons[t.replace("+", "")]}
                {t.endsWith("+") && <path d="M18 12v6h-6z" fill="#222" />}
              </svg>
            </button>
          ))}
        </div>
        <div className="h-[153px] bg-white">
          <table className="w-full table-fixed border-collapse text-[7px] leading-[10px]">
            <thead>
              <tr className="h-3 text-left text-[#444]">
                <th className="w-[86px] pl-px font-normal">レイヤ</th>
                <th className="w-[9px] border-l border-[#e3e6ee]" />
                <th className="w-[9px] border-l border-[#e3e6ee]" />
                <th className="w-[9px] border-l border-[#e3e6ee]" />
                <th className="w-[9px] border-l border-[#e3e6ee]" />
                <th className="border-l border-[#e3e6ee] pl-[2px] font-normal">マテリアル</th>
              </tr>
            </thead>
            <tbody>
              <tr className="h-[10px] border-b border-[#e9ebf0]">
                <td className="pl-1 font-bold">デフォルト</td>
                <td><Icon name="check" className="size-2" /></td>
                <td />
                <td />
                <td><div className="size-[7px] bg-black" /></td>
                <td className="pl-[2px]"><div className="size-1 rounded-full bg-[#f0f0f0]" /></td>
              </tr>
            </tbody>
          </table>
        </div>
        <div className="flex h-[9px] items-center bg-[#f0f0f0]">
          <svg viewBox="0 0 8 8" className="size-2" fill="none" stroke="#333" strokeWidth="1.3"><path d="M5 2L3 4l2 2" /></svg>
          <div className="h-full w-[91px] bg-[#cdcdcd]" />
          <svg viewBox="0 0 8 8" className="mr-[2px] ml-auto size-2" fill="none" stroke="#333" strokeWidth="1.3"><path d="M3 2l2 2-2 2" /></svg>
        </div>
      </div>
    </section>
  );
}

function Dropdown({ id, value }: { id: string; value: string }) {
  return (
    <span className="flex h-[9px] flex-1 items-center bg-white">
      <select id={id} defaultValue={value} className="h-[9px] min-w-0 flex-1 appearance-none bg-white pl-px text-[7px] leading-[9px] outline-none">
        <option>{value}</option>
      </select>
      <span className="flex size-[9px] items-center justify-center border border-[#b5b5b5] bg-[#e2e2e2]"><Chevron /></span>
    </span>
  );
}

function Display() {
  return (
    <section className="mt-1 mr-[2px] ml-[3px]">
      <div className="mb-px h-[2px] bg-[#dde2ed]" />
      <PanelTab icon="monitor">表示</PanelTab>
      <div className="border border-t-0 border-[#d5dbe8] px-[3px] pt-[3px] pb-1">
        <div className="flex text-[7px] leading-[10px]">
          <div className="min-w-0 flex-1 pl-px">
            <div className="flex h-[11px] items-center">
              <label htmlFor="active-view" className="w-[115px]">アクティブビューポート</label>
              <input id="active-view" readOnly value="Right" className="h-[11px] min-w-0 flex-1 bg-white pl-[2px] text-[7px] outline-none" />
            </div>
            <div className="flex h-[11px] items-center border-y border-[#dfe3eb]">
              <label htmlFor="display-mode" className="w-[115px]">表示モード</label>
              <Dropdown id="display-mode" value="ワイヤフレーム" />
            </div>
            <h3 className="h-[11px] text-[8px] leading-[11px]">一般設定</h3>
            <div className="flex h-[11px] items-center border-y border-[#dfe3eb]">
              <label htmlFor="background" className="w-[115px] pl-[10px]">背景</label>
              <Dropdown id="background" value="アプリケーションの設定を使用" />
            </div>
            <div className="flex h-[11px] items-center border-b border-[#dfe3eb]">
              <span className="w-[115px] pl-[10px]">サーフェスアイソカーブ</span>
              <span className="pl-px"><Check label="サーフェスアイソカーブ" checked hideLabel /></span>
            </div>
          </div>
          <div className="flex w-[9px] flex-col items-center bg-[#f0f0f0] pt-[2px] pb-px">
            <Chevron up />
            <div className="mt-px h-[9px] w-full bg-[#cdcdcd]" />
            <span className="mt-auto flex"><Chevron /></span>
          </div>
        </div>
        <button type="button" className="mt-px block w-full border-2 border-[#4a9be0] bg-[#e1e1e1] text-[7px] leading-[7px]">
          「ワイヤフレーム」設定を編集...
        </button>
      </div>
    </section>
  );
}

/* ------------------------------------------------------------------ */
/* Bottom bars                                                        */
/* ------------------------------------------------------------------ */

const osnaps: [string, boolean, string][] = [
  ["端点", true, "w-[26px]"],
  ["近接点", false, "w-[33px]"],
  ["点", true, "w-[19px]"],
  ["中点", true, "w-[26px]"],
  ["中心点", true, "w-[33px]"],
  ["交点", true, "w-[26px]"],
  ["垂直点", true, "w-[33px]"],
  ["接点", true, "w-[26px]"],
  ["四半円点", false, "w-[40px]"],
  ["ノット", false, "w-[27px]"],
  ["頂点", true, "w-[27px]"],
  ["投影", false, "w-[50px]"],
  ["無効", false, "w-[30px]"],
];

const statusCells: [string, string][] = [
  ["作業平面", "w-[37px]"],
  ["x 21.455", "w-[47px]"],
  ["y -5.867", "w-[47px]"],
  ["z 0", "w-[46px]"],
  ["ミリメートル", "w-[47px]"],
  ["■", "w-[89px]"],
  ["グリッドスナップ", "w-[56px]"],
  ["直交モード", "w-[41px]"],
  ["平面モード", "w-[41px]"],
  ["Osnap", "w-[28px]"],
  ["スマートトラック", "w-[54px]"],
  ["ガムボール", "w-[42px]"],
  ["ヒストリを記録", "w-[50px]"],
  ["フィルタ", "w-[31px]"],
];
const enabledCells = ["Osnap", "スマートトラック", "ガムボール"];

function BottomBars() {
  return (
    <footer>
      <div className="flex h-[15px] items-center pb-[2px] pl-[5px] text-[7px] leading-[10px]">
        {osnaps.map(([label, on, w], i) => (
          <div key={label} className={w}>
            <Check label={label} checked={on} disabled={i > 10} />
          </div>
        ))}
      </div>
      <div className="flex h-[11px] border-t border-[#d0d6e4] text-[7px] leading-[10px] whitespace-nowrap">
        {statusCells.map(([label, w]) => (
          <button
            key={label}
            type="button"
            className={`flex items-center overflow-hidden border-r border-[#cdd3e2] ${w} ${
              enabledCells.includes(label) ? "bg-[#d0d8ee] font-bold" : ""
            } ${label === "■" ? "gap-px pl-px" : "justify-center"}`}
          >
            {label === "■" ? (
              <>
                <span className="size-2 bg-black" />
                デフォルト
              </>
            ) : (
              label
            )}
          </button>
        ))}
        <span>CPU使用率: 0.2 %</span>
      </div>
    </footer>
  );
}

export default function App() {
  return (
    <div className="flex h-screen flex-col overflow-hidden bg-[#eaecf1] font-['Liberation_Sans','Noto_Sans_CJK_JP',sans-serif] text-[#2c2c2c] [font-feature-settings:'palt']">
      <TitleBar />
      <Menus />
      <CommandArea />
      <Toolbars />
      <div className="flex min-h-0 flex-1">
        <SideTools />
        <Viewports />
        <aside className="w-[253px] shrink-0 pl-px">
          <BoxEdit />
          <Layers />
          <Display />
        </aside>
      </div>
      <BottomBars />
    </div>
  );
}
